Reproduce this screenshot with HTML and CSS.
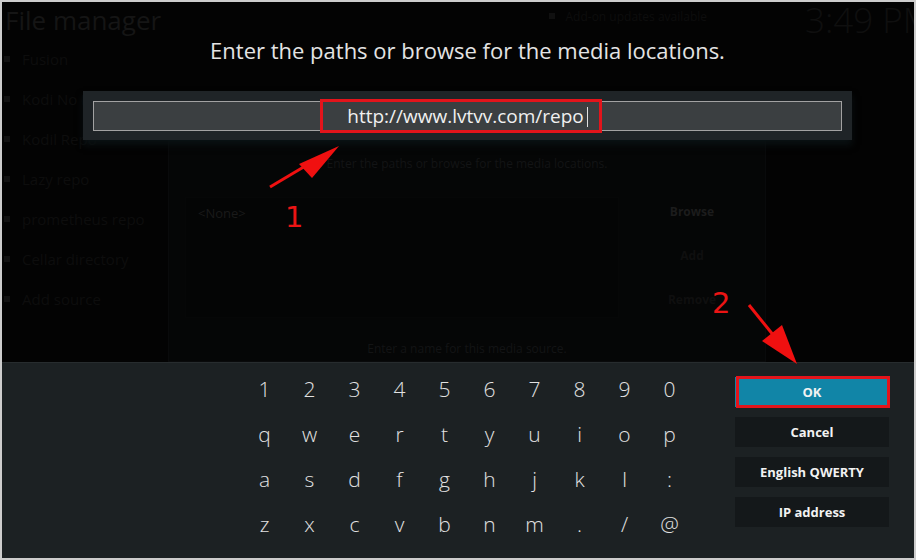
FILE: index.html
```html
<!DOCTYPE html>
<html lang="en">
<head>
  <meta charset="UTF-8" />
  <title>File manager - Add source</title>
  <link rel="stylesheet" href="styles.css">
</head>
<body>

  <div class="screen">
    <div class="kodi">

      <!-- dimmed window underneath the keyboard -->
      <div class="backdrop">
        <div class="topbar">
          <div class="title">File manager</div>
          <div class="status"><span class="dot"></span>Add-on updates available</div>
          <div class="clock">3:49 PM</div>
        </div>
        <div class="main">
          <ul class="sources">
            <li>Fusion</li>
            <li>Kodi No Limits</li>
            <li>Kodil Repo</li>
            <li>Lazy repo</li>
            <li>prometheus repo</li>
            <li>Cellar directory</li>
            <li>Add source</li>
          </ul>
          <div class="dialog">
            <div class="dlg-head">Enter the paths or browse for the media locations.</div>
            <div class="dlg-row">
              <div class="paths">&lt;None&gt;</div>
              <div class="dlg-buttons">
                <div class="dlg-btn strong">Browse</div>
                <div class="dlg-btn">Add</div>
                <div class="dlg-btn">Remove</div>
              </div>
            </div>
            <div class="dlg-foot">Enter a name for this media source.</div>
          </div>
        </div>
      </div>

      <!-- on-screen keyboard -->
      <div class="keyboard">
        <div class="kb-heading">Enter the paths or browse for the media locations.</div>
        <div class="kb-input">
          <div class="field">http://www.lvtvv.com/repo<span class="caret"></span></div>
        </div>
        <div class="kb-panel">
          <div class="keys">
            <span>1</span><span>2</span><span>3</span><span>4</span><span>5</span>
            <span>6</span><span>7</span><span>8</span><span>9</span><span>0</span>
            <span>q</span><span>w</span><span>e</span><span>r</span><span>t</span>
            <span>y</span><span>u</span><span>i</span><span>o</span><span>p</span>
            <span>a</span><span>s</span><span>d</span><span>f</span><span>g</span>
            <span>h</span><span>j</span><span>k</span><span>l</span><span>:</span>
            <span>z</span><span>x</span><span>c</span><span>v</span><span>b</span>
            <span>n</span><span>m</span><span>.</span><span>/</span><span>@</span>
          </div>
          <div class="kb-actions">
            <div class="kb-btn ok">OK</div>
            <div class="kb-btn">Cancel</div>
            <div class="kb-btn">English QWERTY</div>
            <div class="kb-btn">IP address</div>
          </div>
        </div>
      </div>
    </div>

    <!-- red annotations drawn on top of the screenshot -->
    <svg class="marks" width="916" height="560" viewBox="0 0 916 560">
      <rect x="321.5" y="100.5" width="279" height="31" fill="none" stroke="#e3141b" stroke-width="3" />
      <rect x="737.5" y="377.5" width="151" height="29" fill="none" stroke="#e3141b" stroke-width="3" />
      <line x1="270" y1="187" x2="312" y2="162" stroke="#f01010" stroke-width="3" />
      <polygon points="299,164 312,178 339,146" fill="#f01010" />
      <line x1="749" y1="305" x2="774" y2="336" stroke="#f01010" stroke-width="3" />
      <polygon points="762,341 782,325 797,364" fill="#f01010" />
      <text x="285" y="227" class="num">1</text>
      <text x="712" y="313" class="num">2</text>
    </svg>
  </div>

</body>
</html>
```

FILE: styles.css
```css
body {
  margin: 0;
  background: #cdcdcd;
  font-family: 'Open Sans', 'Noto Sans', sans-serif;
}

.screen {
  position: relative;
  width: 916px;
  height: 560px;
  box-sizing: border-box;
  border: 2px solid #cdcdcd;
  background: #030303;
  overflow: hidden;
}

.kodi {
  position: relative;
  width: 931px;
  height: 556px;
}

/* ---- dimmed background window ---- */

.topbar {
  display: flex;
  height: 37px;
  align-items: center;
}

.title {
  width: 552px;
  padding-left: 3px;
  box-sizing: border-box;
  font-size: 26px;
  line-height: 37px;
  color: #151515;
  white-space: nowrap;
}

.status {
  width: 259px;
  margin-top: -9px;
  font-size: 12px;
  color: #0d0d0d;
  display: flex;
  align-items: center;
  white-space: nowrap;
}

.dot {
  width: 6px;
  height: 6px;
  margin-right: 11px;
  background: #101010;
}

.clock {
  font-size: 35px;
  font-weight: 300;
  color: #0f0f0f;
  margin-top: -2px;
  white-space: nowrap;
}

.main {
  display: flex;
}

.sources {
  list-style: none;
  margin: 0;
  padding: 0;
  width: 166px;
}

.sources li {
  height: 40px;
  line-height: 40px;
  padding-left: 20px;
  position: relative;
  font-size: 15px;
  color: #0d0d0d;
  white-space: nowrap;
}

.sources li::before {
  content: "";
  position: absolute;
  left: 2px;
  top: 17px;
  width: 6px;
  height: 6px;
  background: #111;
}

.dialog {
  width: 598px;
  height: 222px;
  margin-top: 101px;
  box-sizing: border-box;
  padding: 0 16px;
  background: #050606;
  border: 1px solid #090a0b;
  display: flex;
  flex-direction: column;
}

.dlg-head {
  height: 47px;
  line-height: 46px;
  text-align: center;
  font-size: 12px;
  color: #131415;
}

.dlg-row {
  display: flex;
  gap: 16px;
  margin-top: 9px;
  height: 121px;
}

.paths {
  flex: 1;
  padding: 6px 12px;
  font-size: 13px;
  color: #1a1a1a;
  background: #040505;
  border: 1px solid #060707;
}

.dlg-buttons {
  width: 114px;
  display: flex;
  flex-direction: column;
  gap: 14px;
}

.dlg-btn {
  height: 30px;
  line-height: 30px;
  text-align: center;
  font-size: 12px;
  font-weight: bold;
  color: #0f0f0f;
  background: #050606;
}

.dlg-btn.strong {
  color: #1c1c1c;
}

.dlg-foot {
  margin-top: 22px;
  text-align: center;
  font-size: 12px;
  color: #131415;
}

/* ---- keyboard overlay ---- */

.keyboard {
  position: absolute;
  inset: 0;
  display: flex;
  flex-direction: column;
  align-items: center;
}

.kb-heading {
  margin-top: 33px;
  font-size: 22px;
  line-height: 30px;
  color: #e4e4e4;
}

.kb-input {
  margin-top: 26px;
  width: 769px;
  padding: 10px 10px 9px;
  box-sizing: border-box;
  background: #1f2427;
  box-shadow: 0 5px 7px #0a1113;
}

.field {
  height: 30px;
  box-sizing: border-box;
  border: 1px solid #a2a2a2;
  background: #3b3f41;
  text-align: center;
  font-size: 19px;
  line-height: 28px;
  color: #f0f0f0;
}

.caret {
  display: inline-block;
  width: 1px;
  height: 20px;
  margin-left: 3px;
  vertical-align: -4px;
  background: #e0e0e0;
}

.kb-panel {
  margin-top: auto;
  width: 100%;
  height: 196px;
  box-sizing: border-box;
  border-top: 1px solid #272c2e;
  background: #1c2123;
  display: flex;
  align-items: flex-start;
  padding-left: 240px;
}

.keys {
  display: grid;
  grid-template-columns: repeat(10, 45px);
  grid-auto-rows: 45px;
  margin-top: 3px;
}

.keys span {
  display: flex;
  align-items: center;
  justify-content: center;
  font-size: 21px;
  font-weight: 300;
  color: #e2e2e2;
}

.kb-actions {
  margin-left: 43px;
  margin-top: 14px;
  width: 154px;
  display: flex;
  flex-direction: column;
  gap: 10px;
}

.kb-btn {
  height: 30px;
  line-height: 30px;
  text-align: center;
  font-size: 13px;
  font-weight: bold;
  color: #f2f2f2;
  background: #14181a;
}

.kb-btn.ok {
  background: #1185a7;
}

/* ---- annotations ---- */

.marks {
  position: absolute;
  left: -2px;
  top: -2px;
}

.marks .num {
  font-family: 'DejaVu Sans', sans-serif;
  font-size: 29px;
  fill: #ec1414;
}
```
